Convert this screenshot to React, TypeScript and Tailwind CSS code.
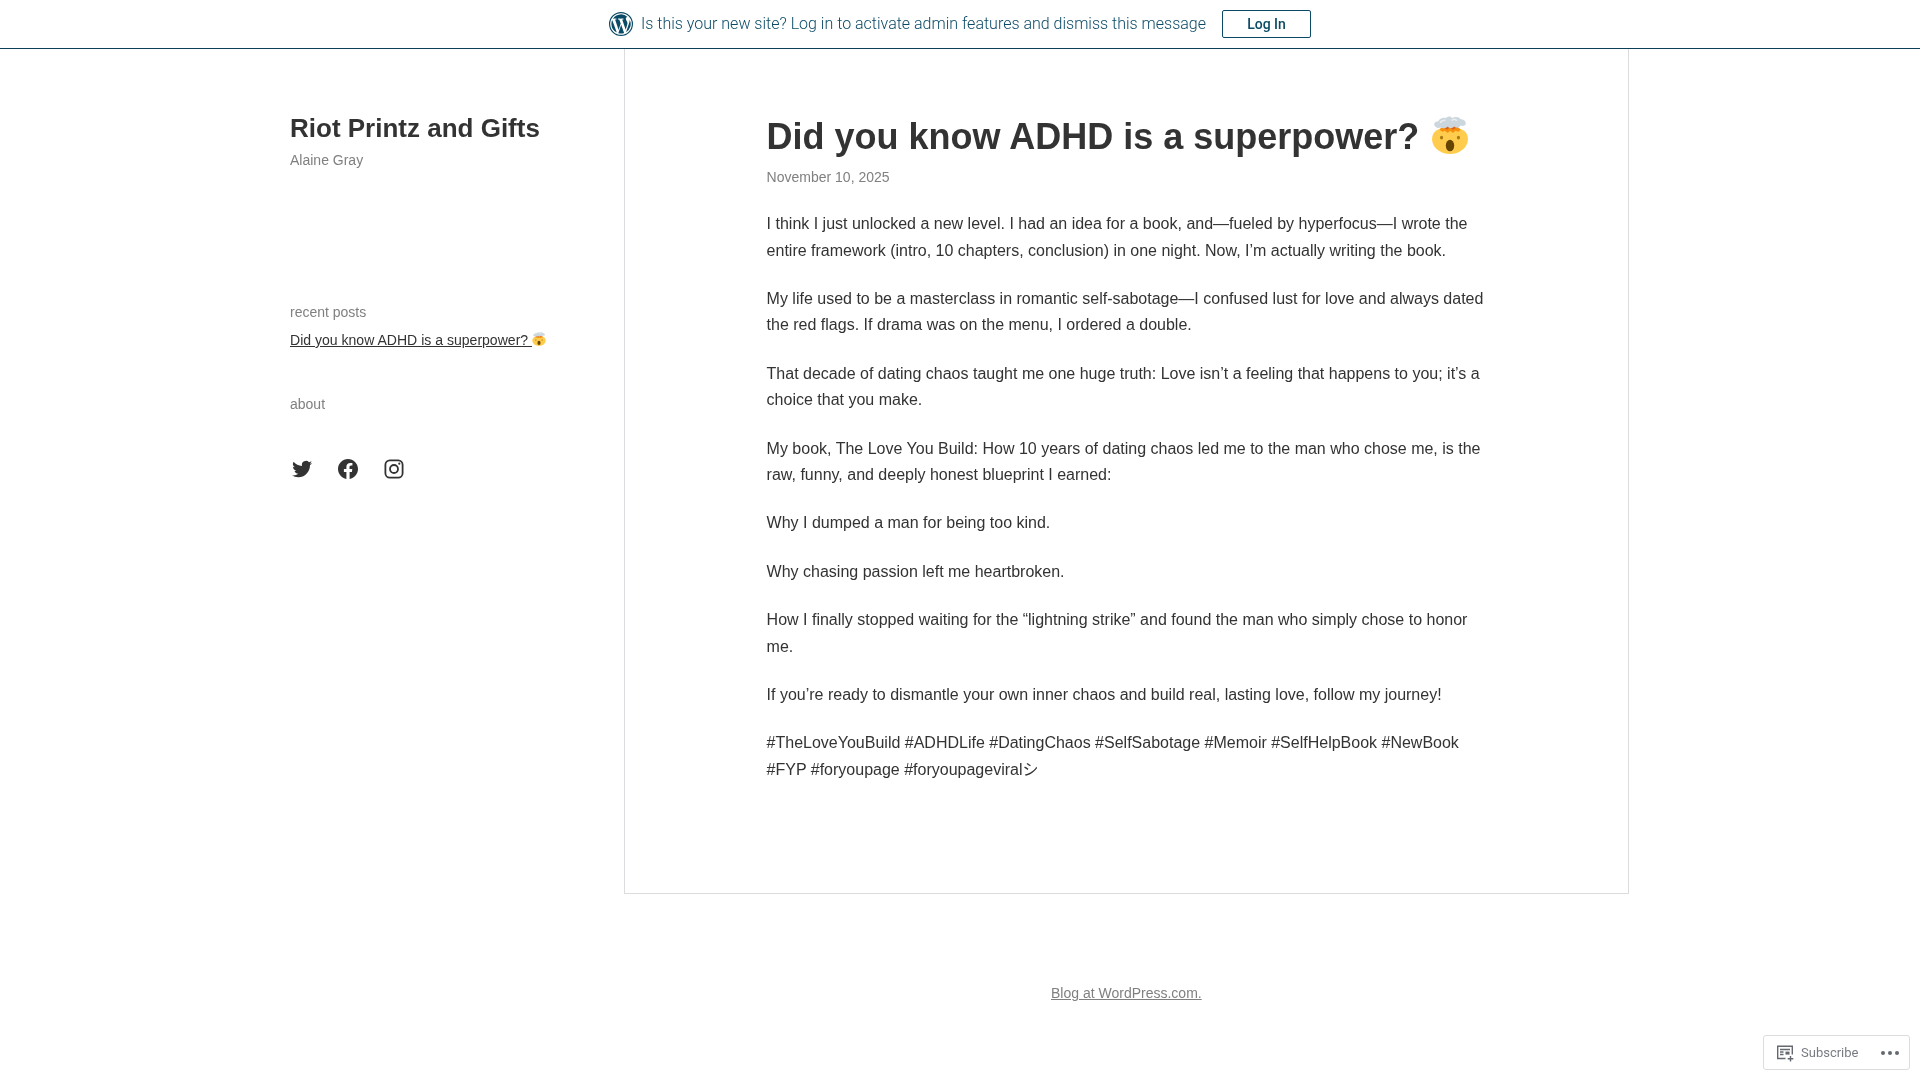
const sans = "font-['Liberation_Sans',Arial,sans-serif]";

function WpLogo() {
  return (
    <svg viewBox="0 0 24 24" className="w-6 h-6 fill-[#0b4a66]">
      <path d="M12 0a12 12 0 1 0 0 24 12 12 0 0 0 0-24Zm0 1.2A10.8 10.8 0 1 1 12 22.8 10.8 10.8 0 0 1 12 1.2ZM2.4 12a9.6 9.6 0 0 0 5.4 8.6L3.2 8.1A9.5 9.5 0 0 0 2.4 12Zm16.1-.5c0-1.2-.4-2-.8-2.6-.5-.8-.9-1.5-.9-2.3 0-.9.7-1.7 1.6-1.7h.1A9.6 9.6 0 0 0 4 6.7h.6c1 0 2.5-.1 2.5-.1.5 0 .6.7.1.8 0 0-.5.1-1.1.1l3.5 10.4 2.1-6.3-1.5-4.1c-.5 0-1-.1-1-.1-.5 0-.5-.8 0-.8 0 0 1.6.1 2.5.1 1 0 2.5-.1 2.5-.1.5 0 .6.7.1.8 0 0-.5.1-1.1.1l3.5 10.3 1-3.2c.4-1.3.7-2.2.7-3Zm-6.3 1.3-2.9 8.4a9.6 9.6 0 0 0 5.9-.2l-.1-.1-2.9-8.1Zm8.3-5.4.1 1c0 1-.2 2.1-.7 3.4l-2.9 8.5a9.6 9.6 0 0 0 3.5-12.9Z" />
    </svg>
  );
}

function MindBlown({ size, className }: { size: number; className?: string }) {
  return (
    <svg viewBox="0 0 36 36" width={size} height={size} className={`inline-block shrink-0 ${className ?? ""}`}>
      <path d="M1 22C1 15 6 11 18 11s17 4 17 11c0 8-8 14-17 14S1 30 1 22Z" fill="#ffcc4d" />
      <path d="M8 13c2-3 5-4 10-4s8 1 10 4l-2 2-3-1-2 2-3-2-2 2-3-2-2 1-3-2Z" fill="#f4900c" />
      <path d="M11 11l2-3h10l2 3-3 1-1 1-3-2-3 2-1-1-3-1Z" fill="#dd5f1c" />
      <path d="M3 8c0-2 2-3 4-3 1-3 5-4 7-3 2-2 5-2 6 0 3-2 7-1 8 1 2 0 5 1 5 4 0 2-3 3-5 2-1 2-4 3-6 1-2 2-5 2-6 0-2 2-5 2-7 1-3 1-6-1-6-3Z" fill="#ccd6dd" />
      <path d="M9 6c1-2 3-2 4-2M20 4c1-1 3-1 4 0" fill="none" stroke="#e8edf0" strokeWidth="1.6" strokeLinecap="round" />
      <ellipse cx="18" cy="28" rx="4" ry="5.5" fill="#664500" />
      <ellipse cx="10" cy="20.5" rx="1.5" ry="1.7" fill="#a87a14" />
      <ellipse cx="26" cy="20.5" rx="1.5" ry="1.7" fill="#a87a14" />
    </svg>
  );
}

function Facebook() {
  return (
    <svg viewBox="0 0 24 24" className="w-6 h-6 fill-[#333333]">
      <path d="M12 2C6.5 2 2 6.5 2 12c0 5 3.7 9.1 8.4 9.9v-7H7.9V12h2.5V9.8c0-2.5 1.5-3.9 3.8-3.9 1.1 0 2.2.2 2.2.2v2.5h-1.3c-1.2 0-1.6.8-1.6 1.6V12h2.8l-.4 2.9h-2.3v7C18.3 21.1 22 17 22 12c0-5.5-4.5-10-10-10Z" />
    </svg>
  );
}

function Instagram() {
  return (
    <svg viewBox="0 0 24 24" className="w-6 h-6 fill-none stroke-[#333333] stroke-[1.8]">
      <rect x="3.4" y="3.4" width="17.2" height="17.2" rx="4.4" />
      <circle cx="12" cy="12" r="4" />
      <circle cx="17.3" cy="6.7" r="1.1" className="fill-[#333333] stroke-none" />
    </svg>
  );
}

function TwitterBird() {
  return (
    <svg viewBox="0 0 24 24" className="w-6 h-6 fill-[#333333]">
      <path d="M22.2 5.9c-.7.3-1.5.5-2.4.6.9-.5 1.5-1.3 1.8-2.3-.8.5-1.7.8-2.6 1a4.1 4.1 0 0 0-7 3.7A11.6 11.6 0 0 1 3.6 4.7a4.1 4.1 0 0 0 1.3 5.5c-.7 0-1.3-.2-1.9-.5v.1c0 2 1.4 3.6 3.3 4-.6.2-1.2.2-1.8.1.5 1.6 2 2.8 3.8 2.8A8.2 8.2 0 0 1 2 18.4a11.6 11.6 0 0 0 6.3 1.8c7.5 0 11.7-6.3 11.7-11.7v-.5c.8-.6 1.5-1.3 2.2-2.1Z" />
    </svg>
  );
}

function SubscribeIcon() {
  return (
    <svg viewBox="0 0 20 20" className="w-5 h-5 fill-none stroke-[#646970] stroke-[1.4]">
      <path d="M10.5 15.5H2.7V3.2h14.6v8.3" />
      <path d="M5 6.5h10M5 9h3.5M5 11.5h3.5" />
      <rect x="10.5" y="8.6" width="4" height="3" className="fill-[#646970] stroke-none" />
      <path d="M15.5 13v5.5M12.7 15.8h5.6" />
    </svg>
  );
}

const paragraphs = [
  "I think I just unlocked a new level. I had an idea for a book, and—fueled by hyperfocus—I wrote the entire framework (intro, 10 chapters, conclusion) in one night. Now, I’m actually writing the book.",
  "My life used to be a masterclass in romantic self-sabotage—I confused lust for love and always dated the red flags. If drama was on the menu, I ordered a double.",
  "That decade of dating chaos taught me one huge truth: Love isn’t a feeling that happens to you; it’s a choice that you make.",
  "My book, The Love You Build: How 10 years of dating chaos led me to the man who chose me, is the raw, funny, and deeply honest blueprint I earned:",
  "Why I dumped a man for being too kind.",
  "Why chasing passion left me heartbroken.",
  "How I finally stopped waiting for the “lightning strike” and found the man who simply chose to honor me.",
  "If you’re ready to dismantle your own inner chaos and build real, lasting love, follow my journey!",
  "#TheLoveYouBuild #ADHDLife #DatingChaos #SelfSabotage #Memoir #SelfHelpBook #NewBook #FYP #foryoupage #foryoupageviralシ",
];

export default function App() {
  return (
    <div className={`${sans} relative min-h-[1080px] text-[#333333] overflow-hidden [will-change:transform]`}>
      <div className="h-[49px] border-b border-[#0b3f57] flex items-center justify-center font-['Roboto',sans-serif] text-[#0b4a66]">
        <WpLogo />
        <span className="ml-2 text-[16px] font-light">Is this your new site? Log in to activate admin features and dismiss this message</span>
        <button className="ml-4 w-[89px] h-[28px] border border-[#0b4a66] rounded-[2px] text-[14px] font-medium">Log In</button>
      </div>

      <div className="flex ml-[290px]">
        <aside className="w-[334px] pt-[62px]">
          <h1 className="text-[26px] leading-[34px] font-bold">Riot Printz and Gifts</h1>
          <p className="mt-[5px] text-[14px] leading-[20px] text-[#808080]">Alaine Gray</p>
          <p className="mt-[132px] text-[14px] leading-[20px] text-[#808080]">recent posts</p>
          <a className="mt-[8px] flex items-center text-[14.05px] leading-[20px] underline whitespace-pre">
            Did you know ADHD is a superpower? <MindBlown size={14} className="-translate-y-px" />
          </a>
          <p className="mt-[44px] text-[14px] leading-[20px] text-[#808080]">about</p>
          <div className="mt-[43px] flex gap-[22px]">
            <TwitterBird />
            <Facebook />
            <Instagram />
          </div>
        </aside>

        <main className="w-[1005px] h-[845px] border-x border-b border-[#dcdcde] pl-[141.6px] pr-[140px] pt-[65px]">
          <h2 className="flex items-center gap-3 text-[36px] leading-[45px] font-bold whitespace-nowrap">
            Did you know ADHD is a superpower? <MindBlown size={38} className="-translate-y-[2px]" />
          </h2>
          <p className="mt-[8px] text-[14px] leading-[20px] text-[#808080]">November 10, 2025</p>
          <div className="mt-[24.2px] flex flex-col gap-[22px] text-[16px] leading-[26.4px]">
            {paragraphs.map((p) => (
              <p key={p} className="font-['Liberation_Sans','Noto_Sans_CJK_JP',sans-serif]">{p}</p>
            ))}
          </div>
        </main>
      </div>

      <p className="mt-[89px] ml-[1051px] text-[14px] leading-[20px] text-[#808080] underline">Blog at WordPress.com.</p>

      <div className="absolute right-[10px] bottom-[10px] w-[147px] h-[35px] border border-[#dcdcde] rounded-[3px] bg-white flex items-center pl-[11px] font-['Roboto',sans-serif] text-[13px] text-[#787c82]">
        <SubscribeIcon />
        <span className="ml-[6px]">Subscribe</span>
        <span className="ml-auto mr-[10px] flex gap-[3px]">
          <i className="w-[4px] h-[4px] rounded-full bg-[#646970]" />
          <i className="w-[4px] h-[4px] rounded-full bg-[#646970]" />
          <i className="w-[4px] h-[4px] rounded-full bg-[#646970]" />
        </span>
      </div>
    </div>
  );
}
